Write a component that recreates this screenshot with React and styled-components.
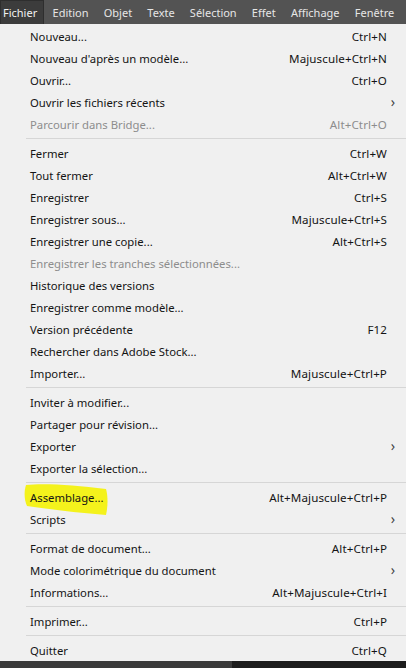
import React from "react";
import styled, { createGlobalStyle } from "styled-components";

const GlobalStyle = createGlobalStyle`
	html, body {
		margin: 0;
		padding: 0;
		background: #f0f0f0;
	}
	body {
		font-family: "Noto Sans", "Open Sans", sans-serif;
	}
`;

const menus = ["Fichier", "Edition", "Objet", "Texte", "Sélection", "Effet", "Affichage", "Fenêtre"];

const groups = [
	[
		{ label: "Nouveau...", key: "Ctrl+N" },
		{ label: "Nouveau d'après un modèle...", key: "Majuscule+Ctrl+N" },
		{ label: "Ouvrir...", key: "Ctrl+O" },
		{ label: "Ouvrir les fichiers récents", sub: true },
		{ label: "Parcourir dans Bridge...", key: "Alt+Ctrl+O", disabled: true },
	],
	[
		{ label: "Fermer", key: "Ctrl+W" },
		{ label: "Tout fermer", key: "Alt+Ctrl+W" },
		{ label: "Enregistrer", key: "Ctrl+S" },
		{ label: "Enregistrer sous...", key: "Majuscule+Ctrl+S" },
		{ label: "Enregistrer une copie...", key: "Alt+Ctrl+S" },
		{ label: "Enregistrer les tranches sélectionnées...", disabled: true },
		{ label: "Historique des versions" },
		{ label: "Enregistrer comme modèle..." },
		{ label: "Version précédente", key: "F12" },
		{ label: "Rechercher dans Adobe Stock..." },
		{ label: "Importer...", key: "Majuscule+Ctrl+P" },
	],
	[
		{ label: "Inviter à modifier..." },
		{ label: "Partager pour révision..." },
		{ label: "Exporter", sub: true },
		{ label: "Exporter la sélection..." },
	],
	[
		{ label: "Assemblage...", key: "Alt+Majuscule+Ctrl+P", marked: true },
		{ label: "Scripts", sub: true },
	],
	[
		{ label: "Format de document...", key: "Alt+Ctrl+P" },
		{ label: "Mode colorimétrique du document", sub: true },
		{ label: "Informations...", key: "Alt+Majuscule+Ctrl+I" },
	],
	[{ label: "Imprimer...", key: "Ctrl+P" }],
	[{ label: "Quitter", key: "Ctrl+Q" }],
];

const App = () => {
	return (
		<>
			<GlobalStyle />
			<Page>
				<MenuBar>
					{menus.map((m) => (
						<MenuTitle key={m}>{m}</MenuTitle>
					))}
				</MenuBar>
				<Dropdown>
					{groups.map((g, gi) => (
						<React.Fragment key={gi}>
							{gi > 0 && <Separator />}
							{g.map((item) => (
								<Item key={item.label} disabled={item.disabled}>
									{item.marked && (
										<Marker viewBox="0 0 84 34" preserveAspectRatio="none">
											<path
												d="M2 3 C20 1 50 3 82 7 C84 14 84 24 82 33 C55 31 25 27 3 24 C0 18 0 9 2 3 Z"
												fill="#f4f20a"
												opacity="0.92"
											/>
										</Marker>
									)}
									<Label>{item.label}</Label>
									{item.key && <Shortcut>{item.key}</Shortcut>}
									{item.sub && <Arrow>›</Arrow>}
								</Item>
							))}
						</React.Fragment>
					))}
				</Dropdown>
				<BottomStrip>
					<StripLeft />
					<StripRight />
				</BottomStrip>
			</Page>
		</>
	);
};

export default App;

const Page = styled.div`
	width: 406px;
	height: 668px;
	overflow: hidden;
	display: flex;
	flex-direction: column;
	background: #f0f0f0;
`;

const MenuBar = styled.div`
	display: flex;
	align-items: stretch;
	height: 24px;
	background: #535353;
	white-space: nowrap;
`;

const MenuTitle = styled.div`
	display: flex;
	align-items: center;
	padding: 0 7.6px;
	font-size: 11px;
	color: #e6e6e6;
	&:first-child {
		width: 44px;
		box-sizing: border-box;
		padding: 0 0 0 2px;
		margin-right: 1px;
		color: #f2f2f2;
		background: #3c3c3c;
		border: 1px solid #2e2e2e;
		border-bottom: none;
	}
`;

const Dropdown = styled.div`
	display: flex;
	flex-direction: column;
	flex: 1;
	padding-top: 1px;
`;

const Item = styled.div`
	position: relative;
	display: flex;
	align-items: center;
	height: 22px;
	padding-left: 30px;
	padding-right: 19px;
	font-size: 11.3px;
	color: ${(p) => (p.disabled ? "#8d8d8d" : "#141414")};
`;

const Label = styled.span`
	position: relative;
	flex: 1;
	white-space: nowrap;
`;

const Shortcut = styled.span`
	position: relative;
	white-space: nowrap;
	font-size: 11.6px;
	letter-spacing: 0.1px;
`;

const Arrow = styled.span`
	position: absolute;
	right: 11px;
	font-size: 14px;
	color: #444;
	top: 1px;
`;

const Marker = styled.svg`
	position: absolute;
	left: 24px;
	top: -4px;
	width: 84px;
	height: 34px;
`;

const Separator = styled.div`
	height: 1px;
	margin: 3px 0 3px 26px;
	background: #d6d6d6;
`;

const BottomStrip = styled.div`
	display: flex;
	height: 7px;
`;

const StripLeft = styled.div`
	width: 232px;
	background: #3a3a3a;
`;

const StripRight = styled.div`
	flex: 1;
	background: #1c1c1c;
`;
